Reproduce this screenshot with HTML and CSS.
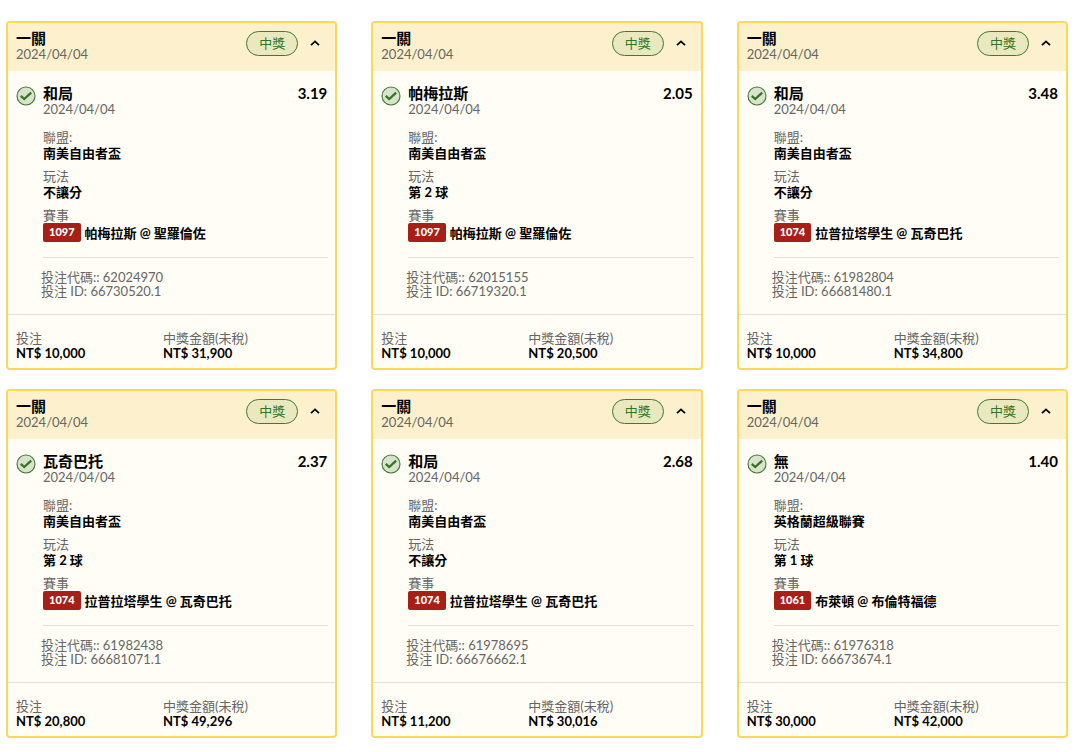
FILE: index.html
```html
<!DOCTYPE html>
<html lang="zh-Hant">
<head>
    <meta charset="UTF-8">
    <meta name="viewport" content="width=device-width, initial-scale=1.0">
    <title>投注</title>
    <link rel="stylesheet" href="styles.css">
</head>
<body>
    <main class="bet-list" id="bet-list"></main>

    <script>
        const bets = [
            { pick: "和局", odds: "3.19", league: "南美自由者盃", market: "不讓分", no: "1097", match: "帕梅拉斯 @ 聖羅倫佐", code: "62024970", id: "66730520.1", stake: "10,000", win: "31,900" },
            { pick: "帕梅拉斯", odds: "2.05", league: "南美自由者盃", market: "第 2 球", no: "1097", match: "帕梅拉斯 @ 聖羅倫佐", code: "62015155", id: "66719320.1", stake: "10,000", win: "20,500" },
            { pick: "和局", odds: "3.48", league: "南美自由者盃", market: "不讓分", no: "1074", match: "拉普拉塔學生 @ 瓦奇巴托", code: "61982804", id: "66681480.1", stake: "10,000", win: "34,800" },
            { pick: "瓦奇巴托", odds: "2.37", league: "南美自由者盃", market: "第 2 球", no: "1074", match: "拉普拉塔學生 @ 瓦奇巴托", code: "61982438", id: "66681071.1", stake: "20,800", win: "49,296" },
            { pick: "和局", odds: "2.68", league: "南美自由者盃", market: "不讓分", no: "1074", match: "拉普拉塔學生 @ 瓦奇巴托", code: "61978695", id: "66676662.1", stake: "11,200", win: "30,016" },
            { pick: "無", odds: "1.40", league: "英格蘭超級聯賽", market: "第 1 球", no: "1061", match: "布萊頓 @ 布倫特福德", code: "61976318", id: "66673674.1", stake: "30,000", win: "42,000" }
        ];

        const betList = document.getElementById("bet-list");

        bets.forEach((bet) => {
            const card = document.createElement("article");
            card.className = "card";
            card.innerHTML = `
                <header class="card-header">
                    <div>
                        <h2 class="title">一關</h2>
                        <p class="date">2024/04/04</p>
                    </div>
                    <span class="status">中獎</span>
                    <button class="toggle" type="button" aria-label="收合" aria-expanded="true">
                        <svg width="10" height="6" viewBox="0 0 10 6"><path d="M1 5.2 L5 1.4 L9 5.2" fill="none" stroke="#000" stroke-width="1.8"/></svg>
                    </button>
                </header>
                <div class="card-body">
                    <svg class="check" width="20" height="20" viewBox="0 0 20 20">
                        <circle cx="10" cy="10" r="9" fill="#d8e2cd" stroke="#43792f" stroke-width="1.1"/>
                        <path d="M4.8 9.8 L8.2 13 L15.2 6.6" fill="none" stroke="#357522" stroke-width="2.3"/>
                    </svg>
                    <div class="details">
                        <div class="pick">
                            <h3 class="title">${bet.pick}</h3>
                            <span class="odds">${bet.odds}</span>
                        </div>
                        <p class="date">2024/04/04</p>
                        <dl class="info">
                            <div><dt>聯盟:</dt><dd>${bet.league}</dd></div>
                            <div><dt>玩法</dt><dd>${bet.market}</dd></div>
                            <div><dt>賽事</dt><dd class="match"><span class="match-no">${bet.no}</span>${bet.match}</dd></div>
                        </dl>
                        <div class="codes">
                            <p>投注代碼:: ${bet.code}</p>
                            <p>投注 ID: ${bet.id}</p>
                        </div>
                    </div>
                </div>
                <dl class="card-footer">
                    <div><dt>投注</dt><dd>NT$ ${bet.stake}</dd></div>
                    <div><dt>中獎金額(未稅)</dt><dd>NT$ ${bet.win}</dd></div>
                </dl>`;
            betList.appendChild(card);
        });

        betList.addEventListener("click", (e) => {
            const button = e.target.closest(".toggle");
            if (!button) return;
            const closed = button.closest(".card").classList.toggle("closed");
            button.setAttribute("aria-expanded", String(!closed));
        });
    </script>
</body>
</html>
```
FILE: styles.css
```css
* {
    box-sizing: border-box;
}
body {
    margin: 0;
    background-color: #fff;
    color: #000;
    font-family: Lato, 'Noto Sans CJK TC', sans-serif;
    font-size: 13px;
    line-height: 16px;
}
h2, h3, p, dl, dd {
    margin: 0;
}
.bet-list {
    display: grid;
    grid-template-columns: repeat(3, 1fr);
    align-items: start;
    gap: 19px 34px;
    padding: 21px 12px 14px 6px;
}
.card {
    background-color: #fffdf5;
    border: 2px solid #f8da58;
    border-radius: 4px;
    overflow: hidden;
}
.card-header {
    display: flex;
    align-items: flex-start;
    padding: 7px 7px 9px 8px;
    background-color: #fcf1cc;
}
.title {
    font-size: 15px;
    line-height: 16px;
    font-weight: bold;
}
.date {
    color: #666;
}
.status {
    margin-top: 1px;
    margin-left: auto;
    padding: 3px 12px 4px;
    border: 1px solid #43792f;
    border-radius: 13px;
    background-color: #e9e8bf;
    color: #357522;
}
.toggle {
    display: flex;
    padding: 10px 8px 8px;
    margin-left: 4px;
    border: none;
    background: none;
    cursor: pointer;
}
.card-body {
    display: flex;
    gap: 7px;
    padding: 14px 7px 0 8px;
}
.check {
    flex: none;
    margin-top: 1px;
}
.details {
    flex: 1;
}
.pick {
    display: flex;
    justify-content: space-between;
    padding-right: 1px;
}
.odds {
    font-size: 15px;
    font-weight: bold;
}
.info {
    display: grid;
    gap: 7px;
    padding: 12px 0 15px;
    border-bottom: 1px solid #e5e0d8;
}
dt {
    color: #666;
}
dd {
    font-weight: bold;
}
.match {
    display: flex;
    align-items: center;
    gap: 4px;
}
.match-no {
    padding: 1px 6px 2px;
    border-radius: 2px;
    background-color: #a81f17;
    color: #fff;
    font-size: 11px;
    font-weight: 900;
}
.codes {
    margin-left: -2px;
    padding: 12px 0 16px;
    color: #666;
    line-height: 14px;
}
.card-footer {
    display: grid;
    grid-template-columns: 147px 1fr;
    padding: 16px 8px 7px;
    border-top: 1px solid #e5e0d8;
}
.card-footer dt {
    line-height: 14px;
}
.closed .card-body {
    display: none;
}
@media (max-width: 900px) {
    .bet-list {
        grid-template-columns: repeat(auto-fill, minmax(300px, 1fr));
    }
}
```
